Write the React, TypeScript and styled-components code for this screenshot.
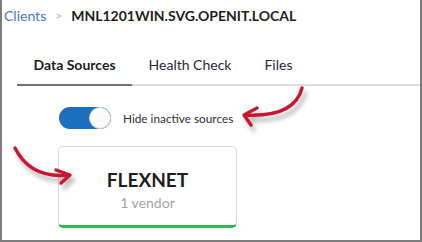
import React, { useState } from 'react';
import styled, { createGlobalStyle } from 'styled-components';

const GlobalStyle = createGlobalStyle`
  body {
    margin: 0;
    background: #fff;
    font-family: Lato, "Open Sans", sans-serif;
  }
`;

const Frame = styled.div`
  position: relative;
  width: 422px;
  height: 242px;
  box-sizing: border-box;
  border-left: 2px solid #7d7d7d;
  border-right: 2px solid #7d7d7d;
  border-bottom: 2px solid #7d7d7d;
  overflow: hidden;
`;

const Breadcrumb = styled.div`
  display: flex;
  align-items: center;
  padding: 8px 0 0 2px;
  font-size: 14px;
  line-height: 16px;
`;

const Crumb = styled.a`
  color: #3f7cc0;
  text-decoration: none;
`;

const Sep = styled.span`
  color: #b8b8b8;
  font-size: 12px;
  margin: 0 9px 0 9px;
`;

const Host = styled.span`
  color: #1e1e1e;
  font-weight: 700;
`;

const TabBar = styled.div`
  display: flex;
  margin: 33px 0 0 15px;
  border-bottom: 2px solid #dedede;
`;

const Tab = styled.div<{ $active?: boolean }>`
  padding: 0 16.5px 11px;
  margin-bottom: -2px;
  font-size: 14px;
  line-height: 16px;
  font-weight: ${(p) => (p.$active ? 700 : 400)};
  color: ${(p) => (p.$active ? '#1c1c28' : '#2a2a3c')};
  border-bottom: 2px solid ${(p) => (p.$active ? '#727272' : 'transparent')};
  cursor: pointer;
`;

const Content = styled.div`
  display: flex;
  flex-direction: column;
  align-items: flex-start;
  padding: 21px 0 0 56px;
  gap: 17px;
`;

const ToggleRow = styled.label`
  display: flex;
  align-items: center;
  gap: 12px;
  margin-left: 1px;
  font-size: 11.8px;
  color: #2f2f2f;
  cursor: pointer;
`;

const Track = styled.span<{ $on: boolean }>`
  position: relative;
  width: 52px;
  height: 22px;
  border-radius: 11px;
  background: ${(p) => (p.$on ? '#1b6fbe' : '#c9c9c9')};
`;

const Knob = styled.span<{ $on: boolean }>`
  position: absolute;
  top: 0;
  left: ${(p) => (p.$on ? '30px' : '0')};
  width: 22px;
  height: 22px;
  box-sizing: border-box;
  border-radius: 50%;
  background: #fafafa;
  border: 1px solid #d4d4d4;
`;

const Card = styled.div`
  width: 179px;
  height: 82px;
  box-sizing: border-box;
  padding-top: 22px;
  border: 1px solid #d5d5d5;
  border-bottom: 3px solid #2fb84c;
  border-radius: 5px;
  text-align: center;
`;

const CardTitle = styled.div`
  font-size: 19px;
  line-height: 22px;
  font-weight: 700;
  color: #1d1d1d;
`;

const CardSub = styled.div`
  margin-top: 3px;
  font-size: 14px;
  line-height: 18px;
  color: #a3a3ab;
`;

const Annotation = styled.svg`
  position: absolute;
  left: -2px;
  top: 0;
  width: 422px;
  height: 242px;
  pointer-events: none;
`;

function Arrows() {
  return (
    <Annotation viewBox="0 0 422 242">
      <defs>
        <filter id="sh" x="-30%" y="-30%" width="160%" height="160%">
          <feGaussianBlur stdDeviation="2" />
        </filter>
      </defs>
      <g fill="none" strokeLinecap="round" strokeLinejoin="round">
        <g stroke="#8a8a8a" strokeWidth="4" opacity="0.55" filter="url(#sh)" transform="translate(3 5)">
          <path d="M302 88 C298 104 284 117 245 115" />
          <path d="M257 108 L244 115 L251 125" />
          <path d="M15 148 C24 166 40 178 69 175" />
          <path d="M56 170 L70 175 L61 183" />
        </g>
        <g stroke="#c8182f" strokeWidth="3.4">
          <path d="M302 88 C298 104 284 117 245 115" />
          <path d="M257 108 L244 115 L251 125" />
          <path d="M15 148 C24 166 40 178 69 175" />
          <path d="M56 170 L70 175 L61 183" />
        </g>
      </g>
    </Annotation>
  );
}

export default function App() {
  const [hide, setHide] = useState(true);
  const tabs = ['Data Sources', 'Health Check', 'Files'];
  return (
    <>
      <GlobalStyle />
      <Frame>
        <Breadcrumb>
          <Crumb href="#">Clients</Crumb>
          <Sep>&gt;</Sep>
          <Host>MNL1201WIN.SVG.OPENIT.LOCAL</Host>
        </Breadcrumb>
        <TabBar>
          {tabs.map((t, i) => (
            <Tab key={t} $active={i === 0}>
              {t}
            </Tab>
          ))}
        </TabBar>
        <Content>
          <ToggleRow onClick={() => setHide(!hide)}>
            <Track $on={hide}>
              <Knob $on={hide} />
            </Track>
            Hide inactive sources
          </ToggleRow>
          <Card>
            <CardTitle>FLEXNET</CardTitle>
            <CardSub>1 vendor</CardSub>
          </Card>
        </Content>
        <Arrows />
      </Frame>
    </>
  );
}
